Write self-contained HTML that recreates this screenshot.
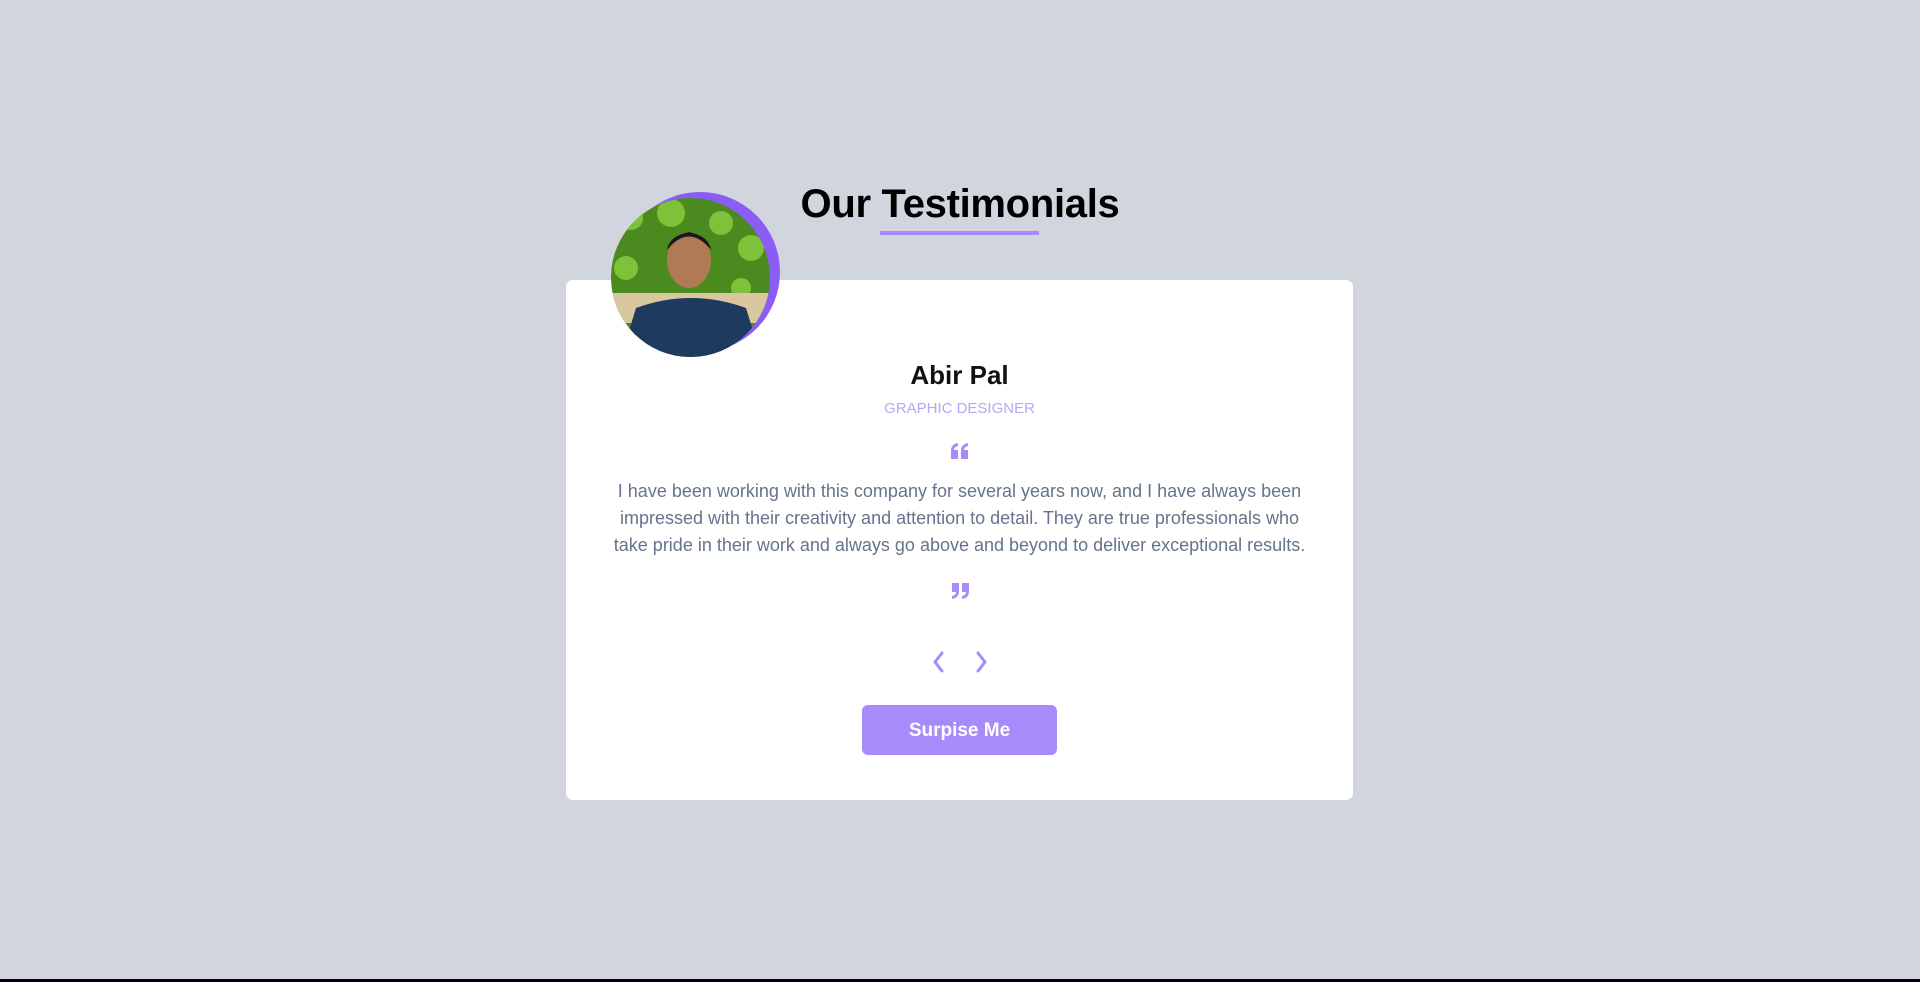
<!DOCTYPE html>
<html><head><meta charset="utf-8"><style>
html,body{margin:0;padding:0}
body{width:1920px;height:982px;background:#d1d5de;position:relative;overflow:hidden;font-family:"Liberation Sans",sans-serif;border-bottom:3px solid #000;box-sizing:border-box}
.title{position:absolute;left:0;width:1920px;top:182px;text-align:center;font-size:40px;font-weight:bold;color:#000}
.title span{display:inline-block;letter-spacing:-0.3px}
.ul{position:absolute;left:880px;top:231px;width:159px;height:4px;background:#a78bfa}
.card{position:absolute;left:566px;top:280px;width:787px;height:520px;background:#fff;border-radius:7px}
.pc{position:absolute;left:620px;top:192px;width:160px;height:160px;border-radius:50%;background:#8b5cf6}
.av{position:absolute;left:611px;top:198px;width:159px;height:159px;border-radius:50%;overflow:hidden}
.c{position:absolute;left:566px;width:787px;text-align:center}
.name{top:360px;font-size:26px;font-weight:bold;color:#111}
.job{top:400px;font-size:15px;color:#b9a6f7}
.txt{top:478px;left:606px;width:707px;font-size:18px;line-height:27px;color:#64748b}
.btn{position:absolute;left:862px;top:705px;width:195px;height:50px;background:#a78bfa;border-radius:6px;color:#fff;font-weight:bold;font-size:19px;text-align:center;line-height:52px}
</style></head><body>
<div class="title"><span>Our Testimonials</span></div>
<div class="ul"></div>
<div class="card"></div>
<div class="pc"></div>
<div class="av"><svg width="159" height="159" viewBox="0 0 159 159">
<rect width="159" height="159" fill="#4a8a1e"/>
<g fill="#7dc238"><circle cx="20" cy="20" r="12"/><circle cx="60" cy="15" r="14"/><circle cx="110" cy="25" r="12"/><circle cx="140" cy="50" r="13"/><circle cx="15" cy="70" r="12"/><circle cx="130" cy="90" r="10"/><circle cx="90" cy="50" r="9"/></g>
<rect x="0" y="95" width="159" height="30" fill="#d9c7a0"/>
<path d="M10 159 L25 110 Q80 90 135 110 L150 159Z" fill="#1e3a5f"/>
<ellipse cx="78" cy="62" rx="22" ry="28" fill="#b07a55"/>
<path d="M56 52 Q78 25 100 52 Q98 38 78 34 Q58 38 56 52Z" fill="#1a1a1a"/>
</svg></div>
<div class="c name">Abir Pal</div>
<div class="c job">GRAPHIC DESIGNER</div>
<svg style="position:absolute;left:951px;top:443px" width="18" height="16" viewBox="0 0 18 16"><g fill="#a78bfa"><path d="M0 16V8Q0 1 7 0V3Q3 4 3 7H7V16Z"/><path d="M10 16V8Q10 1 17 0V3Q13 4 13 7H17V16Z"/></g></svg>
<div class="c txt">I have been working with this company for several years now, and I have always been impressed with their creativity and attention to detail. They are true professionals who take pride in their work and always go above and beyond to deliver exceptional results.</div>
<svg style="position:absolute;left:951px;top:583px" width="18" height="16" viewBox="0 0 18 16"><g fill="#a78bfa" transform="rotate(180 9 8)"><path d="M0 16V8Q0 1 7 0V3Q3 4 3 7H7V16Z"/><path d="M10 16V8Q10 1 17 0V3Q13 4 13 7H17V16Z"/></g></svg>
<svg style="position:absolute;left:929px;top:651px" width="62" height="22" viewBox="0 0 62 22"><g fill="none" stroke="#a78bfa" stroke-width="3" stroke-linecap="round"><path d="M13 2 L6 11 L13 20"/><path d="M49 2 L56 11 L49 20"/></g></svg>
<div class="btn">Surpise Me</div>
</body></html>
